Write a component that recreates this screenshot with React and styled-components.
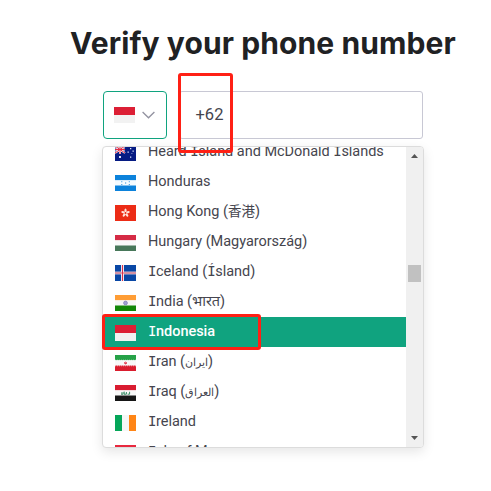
import React from "react";
import styled, { createGlobalStyle } from "styled-components";

const GlobalStyle = createGlobalStyle`
  * { box-sizing: border-box; }
  body { margin: 0; background: #fff; font-family: Roboto, "Noto Sans", "Noto Sans CJK SC", sans-serif; overflow: hidden; }
`;
const Page = styled.main`
  position: relative;
  width: 491px;
  height: 491px;
  padding: 24px 0 0 102px;
  background: #fff;
`;
const Title = styled.h1`
  margin: 0 0 0 -32px;
  height: 67px;
  font-family: Inter, sans-serif;
  font-size: 30px;
  line-height: 38px;
  font-weight: 650;
  letter-spacing: 0.1px;
  color: #202123;
  white-space: nowrap;
`;
const Controls = styled.div`
  display: flex;
  gap: 12px;
  margin-left: 1px;
`;
const CountryButton = styled.button`
  display: flex;
  align-items: center;
  gap: 7px;
  width: 64px;
  height: 48px;
  padding: 0 0 0 10px;
  border: 1px solid #10a37f;
  border-radius: 4px;
  background: #fff;
`;
const PhoneField = styled.div`
  width: 244px;
  height: 48px;
  padding: 0 15.5px;
  border: 1px solid #c8c8d4;
  border-radius: 3px;
  font-size: 16.5px;
  line-height: 46px;
  color: #45454e;
`;
const Dropdown = styled.div`
  display: flex;
  width: 322px;
  height: 302px;
  margin-top: 7px;
  border: 1px solid #dcdcdc;
  border-radius: 4px;
  background: #fff;
  box-shadow: 0 4px 12px rgba(0, 0, 0, 0.1);
  overflow: hidden;
`;
const List = styled.ul`
  flex: 1;
  margin: -10px 0 0;
  padding: 0;
  list-style: none;
`;
const Option = styled.li`
  display: flex;
  align-items: center;
  gap: 12px;
  height: 30px;
  padding-left: 12px;
  background: ${(p) => (p.$selected ? "#10a37f" : "transparent")};
  color: ${(p) => (p.$selected ? "#fff" : "#45454e")};
  font-size: 14.5px;
  font-weight: ${(p) => (p.$selected ? 500 : 400)};
  white-space: nowrap;
  letter-spacing: -0.03px;
`;
const Name = styled.span`
  line-height: 20px;
`;
const SlabCapital = styled.span`
  font-family: "DejaVu Sans Mono", monospace;
  font-size: 14px;
  line-height: 1;
  font-weight: 400;
  letter-spacing: -0.4px;
`;
const Native = styled.span`
  font-size: ${(p) => p.$size}px;
  line-height: 1;
`;
const FlagIcon = styled.svg`
  display: block;
  flex: none;
  width: 21px;
  height: 16px;
  margin-top: ${(p) => (p.$button ? 0 : 2)}px;
`;
const Scrollbar = styled.div`
  display: flex;
  flex-direction: column;
  align-items: center;
  width: 17px;
  padding: 7px 0 7px;
  background: #f0f0f0;
`;
const Thumb = styled.div`
  width: 13px;
  height: 17px;
  margin: 107px 0 auto;
  background: #c1c1c1;
`;
const Arrow = styled.svg`
  width: 7px;
  height: 4px;
  flex: none;
  transform: ${(p) => (p.$down ? "rotate(180deg)" : "none")};
`;
const Highlight = styled.div`
  position: absolute;
  left: ${(p) => p.$x}px;
  top: ${(p) => p.$y}px;
  width: ${(p) => p.$w}px;
  height: ${(p) => p.$h}px;
  border: 3px solid #ff2015;
  border-radius: 3px;
  pointer-events: none;
`;

const stripes = (a, b, c) => (
  <>
    <path fill={a} d="M0 0h21v5.4H0z" />
    <path fill={b} d="M0 5.3h21v5.4H0z" />
    <path fill={c} d="M0 10.6h21V16H0z" />
  </>
);

const flags = {
  hm: (
    <>
      <path fill="#061b83" d="M0 0h21v16H0z" />
      <path stroke="#fff" strokeWidth="2" d="M0 1l10 7M10 1L0 8M5 0v9M0 4.5h10" />
      <path stroke="#e32b43" strokeWidth="1" d="M0 1l10 7M10 1L0 8M5 0v9M0 4.5h10" />
      <path fill="#dbe4ff" d="M4 11h2v2H4zM15 3h1.3v1.3H15zM12.5 6.5h1.3v1.3h-1.3zM17.5 5.5h1.3v1.3h-1.3zM15 11.5h1.3v1.3H15zM16.5 8h.8v.8h-.8z" />
    </>
  ),
  hn: (
    <>
      {stripes("#0c82db", "#f5fbff", "#0c82db")}
      <path fill="#2b91dc" d="M10 7.4h1.2v1.2H10zM6.3 6.3h1v1h-1zM6.3 8.9h1v1h-1zM13.8 6.3h1v1h-1zM13.8 8.9h1v1h-1z" />
    </>
  ),
  hk: (
    <>
      <path fill="#ec2c16" d="M0 0h21v16H0z" />
      <g fill="#ffe3dc">
        {[0, 72, 144, 216, 288].map((r) => (
          <ellipse key={r} cx="10.5" cy="5.7" rx="1.1" ry="2.1" transform={`rotate(${r} 10.5 8)`} />
        ))}
      </g>
      <circle cx="10.5" cy="8" r="1" fill="#ec2c16" />
    </>
  ),
  hu: stripes("#d52b45", "#fafafa", "#48785a"),
  is: (
    <>
      <path fill="#0947a5" d="M0 0h21v16H0z" />
      <path stroke="#cbb9cf" strokeWidth="3" d="M0 8h21" />
      <path stroke="#f0f0f6" strokeWidth="3" d="M7.5 0v16" />
      <path stroke="#df6b78" strokeWidth="1.2" d="M0 8h21" />
      <path stroke="#d9304a" strokeWidth="1.1" d="M7.5 0v16" />
    </>
  ),
  in: (
    <>
      {stripes("#ff9d35", "#f7f7f7", "#138808")}
      <circle cx="10.5" cy="8" r="1.9" fill="#a0a0d2" stroke="#8585bd" strokeWidth=".8" />
    </>
  ),
  id: (
    <>
      <path fill="#dc1f35" d="M0 0h21v8H0z" />
      <path fill="#f2f2f2" d="M0 8h21v8H0z" />
    </>
  ),
  ir: (
    <>
      {stripes("#26a248", "#f8f8f8", "#da1d2e")}
      <path stroke="#fff" strokeWidth=".6" strokeDasharray="1 1" d="M0 5.2h21M0 10.8h21" />
      <path fill="#e02a3d" d="M9.2 7h.7v1.2h.4V6.6h.6v1.6h.4V7h.7v1.5L10.6 9.4 9.2 8.5z" />
    </>
  ),
  iq: (
    <>
      {stripes("#d91c31", "#f8f8f8", "#161616")}
      <path stroke="#238052" strokeWidth=".9" fill="none" d="M6 9.2h2V7M9.2 9.5V6.6M9.2 9.2h2.2V7M12.6 9.2h2V6.8M6.5 7.5v1" />
    </>
  ),
  ie: (
    <>
      <path fill="#05a659" d="M0 0h7v16H0z" />
      <path fill="#f6f6f6" d="M7 0h7v16H7z" />
      <path fill="#ff8516" d="M14 0h7v16h-7z" />
    </>
  ),
  im: <path fill="#e8283e" d="M0 0h21v16H0z" />,
};

const Flag = ({ code, button }) => (
  <FlagIcon viewBox="0 0 21 16" $button={button} aria-hidden="true">
    {flags[code]}
  </FlagIcon>
);

// Capital I is set with slab serifs, so it stays distinct from a lowercase l.
const Slab = ({ text }) =>
  text.split(/([IÍ])/).map((part, i) => (/^[IÍ]$/.test(part) ? <SlabCapital key={i}>{part}</SlabCapital> : part));

const countries = [
  { code: "hm", name: "Heard Island and McDonald Islands" },
  { code: "hn", name: "Honduras" },
  { code: "hk", name: "Hong Kong", native: "香港", size: 13.5 },
  { code: "hu", name: "Hungary", native: "Magyarország", size: 14.5 },
  { code: "is", name: "Iceland", native: "Ísland", size: 14.5 },
  { code: "in", name: "India", native: "भारत", size: 14.5 },
  { code: "id", name: "Indonesia" },
  { code: "ir", name: "Iran", native: "ایران", size: 10.5 },
  { code: "iq", name: "Iraq", native: "العراق", size: 10.5 },
  { code: "ie", name: "Ireland" },
  { code: "im", name: "Isle of Man" },
];

export default function App() {
  return (
    <Page>
      <GlobalStyle />
      <Title>Verify your phone number</Title>
      <Controls>
        <CountryButton aria-label="Country">
          <Flag code="id" button />
          <svg width="13" height="8" viewBox="0 0 13 8" fill="none" stroke="#9292a0" strokeWidth="1.3" aria-hidden="true">
            <path d="M.6 1l5.9 5.8L12.4 1" />
          </svg>
        </CountryButton>
        <PhoneField>+62</PhoneField>
      </Controls>
      <Dropdown>
        <List>
          {countries.map(({ code, name, native, size }) => (
            <Option key={code} $selected={code === "id"}>
              <Flag code={code} />
              <Name>
                <Slab text={name} />
                {native && <> (<Native $size={size}><Slab text={native} /></Native>)</>}
              </Name>
            </Option>
          ))}
        </List>
        <Scrollbar>
          <Arrow viewBox="0 0 7 4"><path fill="#555" d="M0 4L3.5 0 7 4z" /></Arrow>
          <Thumb />
          <Arrow viewBox="0 0 7 4" $down><path fill="#555" d="M0 4L3.5 0 7 4z" /></Arrow>
        </Scrollbar>
      </Dropdown>
      <Highlight $x={178} $y={73} $w={55} $h={80} />
      <Highlight $x={102} $y={314} $w={159} $h={36} />
    </Page>
  );
}
